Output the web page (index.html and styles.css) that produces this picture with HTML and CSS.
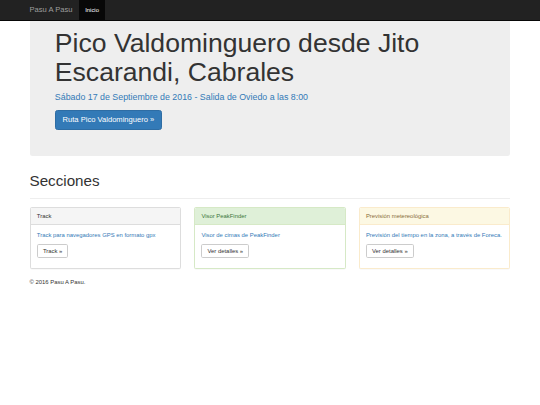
FILE: index.html
```html
<!DOCTYPE html>
<html lang="es">
<head>
<meta charset="utf-8">
<title>Pasu A Pasu</title>
<link rel="stylesheet" href="styles.css">
</head>
<body>
<nav class="navbar">
  <div class="container navbar-inner">
    <a class="brand" href="#">Pasu A Pasu</a>
    <a class="nav-link active" href="#">Inicio</a>
  </div>
</nav>
<div class="container">
  <div class="jumbotron">
    <h1 class="jumbo-title">Pico Valdominguero desde Jito Escarandi, Cabrales</h1>
    <p class="lead">Sábado 17 de Septiembre de 2016 - Salida de Oviedo a las 8:00</p>
    <p class="lead-actions"><a class="btn btn-primary" href="#">Ruta Pico Valdominguero »</a></p>
  </div>
</div>
<div class="container">
  <h1 class="section-title">Secciones</h1>
  <hr class="divider">
  <div class="panels">
    <div class="panel panel-default">
      <div class="panel-heading">Track</div>
      <div class="panel-body">
        <p class="text-primary">Track para navegadores GPS en formato gpx</p>
        <p class="actions"><a class="btn btn-default" href="#">Track »</a></p>
      </div>
    </div>
    <div class="panel panel-success">
      <div class="panel-heading">Visor PeakFinder</div>
      <div class="panel-body">
        <p class="text-primary">Visor de cimas de PeakFinder</p>
        <p class="actions"><a class="btn btn-default" href="#">Ver detalles »</a></p>
      </div>
    </div>
    <div class="panel panel-warning">
      <div class="panel-heading">Previsión metereológica</div>
      <div class="panel-body">
        <p class="text-primary">Previsión del tiempo en la zona, a través de Foreca.</p>
        <p class="actions"><a class="btn btn-default" href="#">Ver detalles »</a></p>
      </div>
    </div>
  </div>
  <footer class="footer">
    <p>© 2016 Pasu A Pasu.</p>
  </footer>
</div>
</body>
</html>
```
FILE: styles.css
```css
* {
  box-sizing: border-box;
}

html,
body {
  margin: 0;
  padding: 0;
}

body {
  font-family: "Liberation Sans", Arial, Helvetica, sans-serif;
  font-size: 5.9px;
  line-height: 8.44px;
  color: #333;
  background: #fff;
}

a {
  text-decoration: none;
}

.container {
  width: 493.6px;
  margin: 0 auto;
  padding: 0 6.33px;
}

/* Navbar */
.navbar {
  height: 21.1px;
  background: #222;
  border-bottom: 1px solid #080808;
}

.navbar-inner {
  display: flex;
  height: 100%;
}

.brand {
  display: flex;
  align-items: center;
  margin-left: -6.33px;
  padding: 0 6.33px;
  font-size: 7.59px;
  color: #9d9d9d;
}

.nav-link {
  display: flex;
  align-items: center;
  padding: 0 6.33px;
  font-size: 5.9px;
  color: #9d9d9d;
}

.nav-link.active {
  background: #080808;
  color: #fff;
}

/* Jumbotron */
.jumbotron {
  background: #eee;
  padding: 7.6px 25.3px 20.25px;
  border-radius: 0 0 2.53px 2.53px;
  margin-bottom: 16.9px;
}

.jumbo-title {
  margin: 0 0 4.22px;
  font-size: 26.58px;
  line-height: 29.24px;
  font-weight: 500;
  color: #333;
}

.lead {
  margin: 0 0 6.33px;
  font-size: 8.86px;
  line-height: 12.66px;
  color: #337ab7;
}

.lead-actions {
  margin: 0 0 6.33px;
  font-size: 8.86px;
  line-height: 12.66px;
}

.btn {
  display: inline-block;
  border: 1px solid transparent;
  white-space: nowrap;
}

.btn-primary {
  padding: 3.6px 6.75px;
  font-size: 7.59px;
  line-height: 10.125px;
  color: #fff;
  background: #337ab7;
  border-color: #2e6da4;
  border-radius: 2.53px;
}

.btn-default {
  padding: 1.8px 5.06px;
  font-size: 5.9px;
  line-height: 8.44px;
  color: #333;
  background: #fff;
  border-color: #ccc;
  border-radius: 1.69px;
}

/* Sections */
.section-title {
  margin: 0 0 8.44px;
  font-size: 15.19px;
  line-height: 16.71px;
  font-weight: 500;
  color: #333;
}

.divider {
  margin: 0 0 7.4px;
  border: 0;
  border-top: 1px solid #eee;
}

.panels {
  display: grid;
  grid-template-columns: repeat(3, 1fr);
  column-gap: 12.66px;
}

.panel {
  margin-bottom: 8.44px;
  background: #fff;
  border: 1px solid #ddd;
  border-radius: 1.69px;
  box-shadow: 0 0.5px 0.5px rgba(0, 0, 0, 0.05);
}

.panel-heading {
  padding: 3.9px 6.33px;
  border-bottom: 1px solid #ddd;
  border-radius: 1.2px 1.2px 0 0;
  background: #f5f5f5;
  color: #333;
}

.panel-success {
  border-color: #d6e9c6;
}

.panel-success .panel-heading {
  background: #dff0d8;
  border-color: #d6e9c6;
  color: #3c763d;
}

.panel-warning {
  border-color: #faebcc;
}

.panel-warning .panel-heading {
  background: #fcf8e3;
  border-color: #faebcc;
  color: #8a6d3b;
}

.panel-body {
  padding: 6.33px;
}

.panel-body p {
  margin: 0 0 4.22px;
}

.text-primary {
  color: #337ab7;
}

.footer p {
  margin: 0;
}
```
